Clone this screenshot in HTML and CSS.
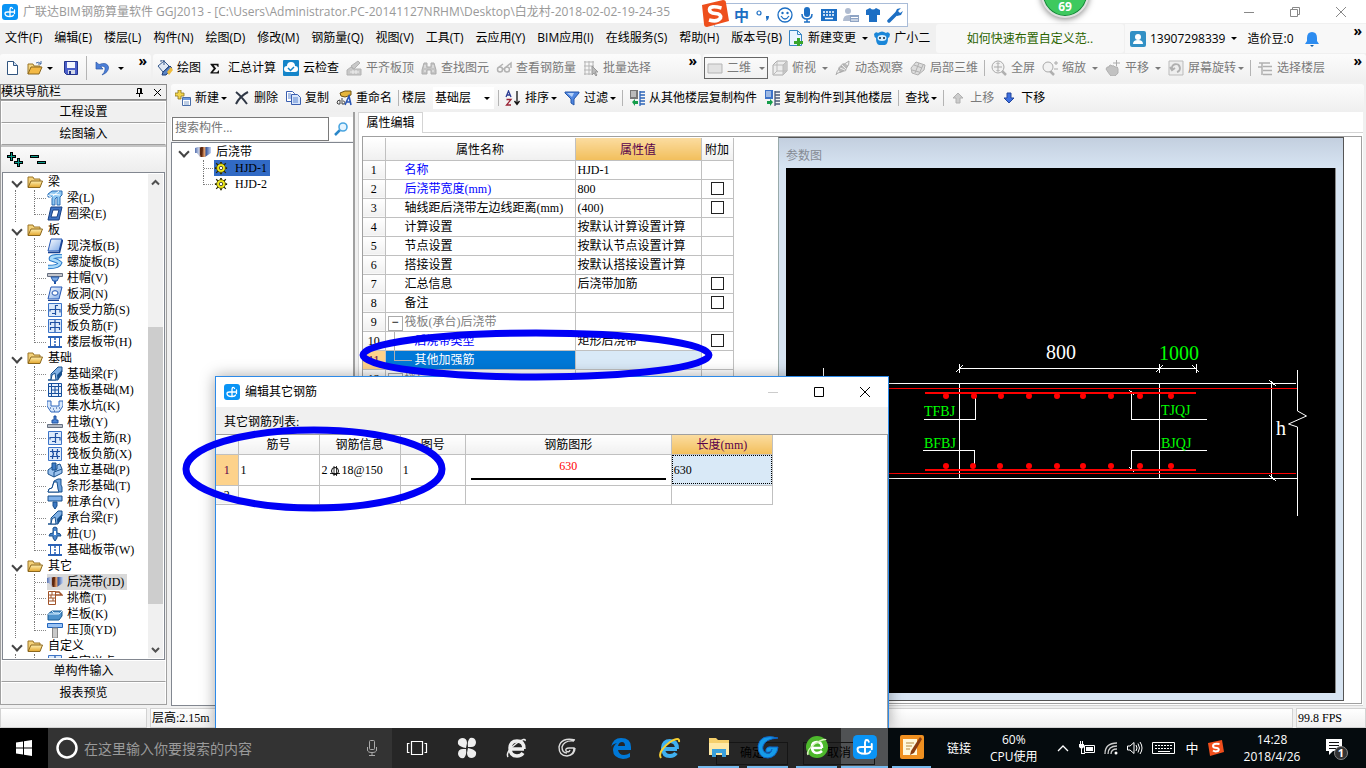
FILE: index.html
```html
<!DOCTYPE html>
<html lang="zh-CN">
<head>
<meta charset="utf-8">
<title>广联达BIM钢筋算量软件 GGJ2013</title>
<link rel="stylesheet" href="styles.css">
</head>
<body>
<svg class="defs" aria-hidden="true">
<defs>
<linearGradient id="gBlue" x1="0" y1="0" x2="1" y2="1"><stop offset="0" stop-color="#fff"/><stop offset="1" stop-color="#7ba7e6"/></linearGradient>
<linearGradient id="gFold" x1="0" y1="0" x2="0" y2="1"><stop offset="0" stop-color="#fff0b0"/><stop offset="1" stop-color="#e2a52c"/></linearGradient>
<linearGradient id="gPost" x1="0" y1="0" x2="1" y2="0"><stop offset="0" stop-color="#5570b0"/><stop offset=".25" stop-color="#c8d2e8"/><stop offset=".4" stop-color="#6a2c10"/><stop offset=".6" stop-color="#e0a070"/><stop offset=".7" stop-color="#3c5ca0"/><stop offset="1" stop-color="#c4d4f4"/></linearGradient>
</defs>
<symbol id="logo" viewBox="0 0 16 16"><rect width="16" height="16" rx="3" fill="#0a94f5"/><path d="M10.500 4.500Q10 3 8.500 3.500L8 5v7.500M12.500 6v3.500M12.500 8H5.500Q3 8 3 9.500 3 12.500 8 12.500q3 0 3.500-1.500" fill="none" stroke="#fff" stroke-width="1.300" stroke-linecap="round"/></symbol>
<symbol id="new" viewBox="0 0 16 16"><path d="M3.500 1.500h6l4 4v9h-10z" fill="#fff" stroke="#31557f"/><path d="M9.500 1.500v4h4" fill="#cfe0f6" stroke="#31557f"/></symbol>
<symbol id="open" viewBox="0 0 16 16"><path d="M1 14V4h5l1 2h6v2" fill="#f5d782" stroke="#9a7424"/><path d="M1 14l3-7h11l-3 7z" fill="#f3b945" stroke="#8a671f"/><path d="M9 3q3-2 5 1M14 1v3h-3" fill="none" stroke="#456ca5"/></symbol>
<symbol id="save" viewBox="0 0 16 16"><path d="M1.500 1.500h13v13h-11l-2-2z" fill="#4b5fc9" stroke="#23348c"/><path d="M4 2h8v6H4z" fill="#f4f7ff"/><path d="M5 10h7v4H5z" fill="#d2d9e8"/><path d="M6 11h2v3H6z" fill="#23348c"/></symbol>
<symbol id="undo" viewBox="0 0 16 16"><path d="M2 2v7h7L6.500 6.500Q12 5 11 10q-.5 2.500-3 5 7-3 6.500-8Q13 1.500 5 4.500z" fill="#4b7fd9" stroke="#2c57a6" stroke-width=".7"/></symbol>
<symbol id="draw" viewBox="0 0 16 16"><path d="M1 6l6-5 5 5-6 6z" fill="#dfe8f4" stroke="#36598c"/><path d="M4 2V0h3v5" fill="none" stroke="#36598c"/><path d="M6 12l7-6 2 2-6 7-4 0z" fill="#5a84c4" stroke="#1f3e78"/><path d="M10 12l4-5 2 3-4 5z" fill="#f0bc3c"/></symbol>
<symbol id="sigma" viewBox="0 0 16 16"><path d="M3 2h10v4h-1Q11.500 4 10 4H7l3 4-4 4.500h4.500q1.500 0 2-2h1V14H3v-1l4-5-4-5z" fill="#111"/></symbol>
<symbol id="cloud" viewBox="0 0 16 16"><rect width="16" height="16" rx="1" fill="#1585c9"/><path d="M4 12a3 3 0 0 1 0-6 4 4 0 0 1 8 0 3 3 0 0 1 0 6z" fill="#fff"/><path d="M5 8l2.500 2.500L11 7" fill="none" stroke="#1585c9" stroke-width="1.500"/></symbol>
<symbol id="align" viewBox="0 0 16 16"><path d="M5 6l7-5 2 2-6 6zM1 10l4-3 2 2h8v6H1z" fill="#c8c8c8" stroke="#b2b2b2"/><path d="M4 12h9M7 10v4M10 10v4" stroke="#eee"/></symbol>
<symbol id="bino" viewBox="0 0 16 16"><path d="M3 3h3v4h4V3h3l2 7v4h-5v-4H6v4H1v-4z" fill="#c4c4c4" stroke="#adadad"/><path d="M3 11h2M11 11h2M4 5v3M12 5v3" stroke="#eee"/></symbol>
<symbol id="glass" viewBox="0 0 16 16"><g fill="none" stroke="#b2b2b2" stroke-width="1.500"><circle cx="4" cy="9.500" r="2.500"/><circle cx="11" cy="9.500" r="2.500"/><path d="M6.500 9h2M3 7l4-3M10 7l5-4v5"/></g></symbol>
<symbol id="batch" viewBox="0 0 16 16"><path d="M1 2h10M1 6h10M1 10h7M1 14h7M2 1v14M6 1v14M10 1v8" stroke="#b5b5b5"/><path d="M9 6l6 6h-3l2 3-1 1-2-3-2 2z" fill="#bbb" stroke="#999"/></symbol>
<symbol id="box" viewBox="0 0 16 16"><path d="M1 4h14v9H1z" fill="#e2e2e2" stroke="#b5b5b5"/></symbol>
<symbol id="cube" viewBox="0 0 16 16"><path d="M1 5l4-4h10v10l-4 4H1z" fill="#ededed" stroke="#aaa"/><path d="M11 5v10l4-4V1z" fill="#c8c8c8"/><path d="M1 5h10v10M11 5l4-4M5 1v10h10M5 11l-4 4" fill="none" stroke="#bbb"/></symbol>
<symbol id="orbit" viewBox="0 0 16 16"><path d="M3 8l5-5 5 2-2 6-6 2z" fill="#bbb"/><path d="M1 15q1-7 13-14 1 8-13 13" fill="none" stroke="#aaa"/><path d="M5 8l5 2M7 5l4 4" stroke="#eee"/></symbol>
<symbol id="part3d" viewBox="0 0 16 16"><path d="M1 8l5-6 9 3-1 5-6 5-6-2z" fill="#ddd" stroke="#b0b0b0"/><path d="M4 5l8 3M2 10l7 2M9 3L5 13M13 5l-4 9" stroke="#b0b0b0"/></symbol>
<symbol id="zoomfit" viewBox="0 0 16 16"><path d="M10 10l5 5" stroke="#b0b0b0" stroke-width="2.500"/><circle cx="7" cy="7" r="6" fill="#f2f2f2" stroke="#aaa"/><path d="M7 3v8M3 7h8M5.500 4L7 2.500 8.500 4M5.500 10L7 11.500 8.500 10" fill="none" stroke="#aaa"/></symbol>
<symbol id="zoomy" viewBox="0 0 16 16"><path d="M8 11l4 4" stroke="#b0b0b0" stroke-width="2.500"/><circle cx="6" cy="7" r="5" fill="#f2f2f2" stroke="#aaa"/><path d="M12 3h4M14 1v4M12 9h4" stroke="#aaa"/></symbol>
<symbol id="hand" viewBox="0 0 16 16"><path d="M1 9q1-3 3-2V6q2-2 3 0 2-1 3 1 3-1 3 2v4q-2 3-4 3H6q-2-2-5-7z" fill="#c2c2c2" stroke="#b0b0b0"/><path d="M8 3h7M11.500 0v6" stroke="#aaa"/></symbol>
<symbol id="rot" viewBox="0 0 16 16"><path d="M1 1h14v14H1z" fill="#eee" stroke="#bbb"/><path d="M4 9a4 4 0 1 1 5 3M2 7l2 3 3-2" fill="none" stroke="#b0b0b0" stroke-width="2"/></symbol>
<symbol id="floors" viewBox="0 0 16 16"><path d="M2 3h11M1 7h4M6 6.500h9M6 10.500h9M6 14.500h9M5 3v12" stroke="#b0b0b0" stroke-width="1.500"/></symbol>
<symbol id="addc" viewBox="0 0 16 16"><path d="M3 0h3v3h3v3H6v3H3V6H0V3h3z" fill="#f2d54c" stroke="#8a7420" stroke-width=".8"/><path d="M7.500 7.500h8v8h-8z" fill="#fff" stroke="#4a6ea9"/><path d="M8 8h7v2H8z" fill="#6d9ae0"/><path d="M9 12h5M9 14h5" stroke="#7d9cc8"/></symbol>
<symbol id="del" viewBox="0 0 16 16"><path d="M2 2q5 4 11 12M14 2Q6 6 2 14" fill="none" stroke="#303846" stroke-width="2"/></symbol>
<symbol id="copy" viewBox="0 0 16 16"><path d="M1.500 1.500h6l2 2v8h-8z" fill="#fff" stroke="#3a5fb0"/><path d="M6.500 4.500h6l3 3v7h-9z" fill="#d8e6fb" stroke="#3a5fb0"/><path d="M3 4h3M3 6h3M3 8h3M8 8h5M8 10h5M8 12h5" stroke="#5c85cf"/></symbol>
<symbol id="ren" viewBox="0 0 16 16"><path d="M4 3l5-2h6v4L9 7 5 6z" fill="#e5b53c" stroke="#6e5213"/><path d="M1 13q0-3 3-3v4H2zM6 8v6h2q2-3-1-3" fill="none" stroke="#444"/><path d="M9 15l4-9 2 9M10 12h5" fill="none" stroke="#2b57b5" stroke-width="1.600"/></symbol>
<symbol id="sort" viewBox="0 0 16 16"><path d="M1 7l2.500-6L6 7M2 5h3" fill="none" stroke="#2c3d94" stroke-width="1.300"/><path d="M1.500 9.500H6L1.500 15H6" fill="none" stroke="#9a2436" stroke-width="1.300"/><path d="M12 1v13M9.500 11l2.500 3.500 2.500-3.500" fill="none" stroke="#111" stroke-width="1.300"/></symbol>
<symbol id="filt" viewBox="0 0 16 16"><path d="M1 2h14v1L10 9v6l-3-2V9L1 3z" fill="#4f86e0" stroke="#2657a8"/><path d="M3 3h7L8 7z" fill="#b6d2f8"/></symbol>
<symbol id="cpf" viewBox="0 0 16 16"><path d="M1 0h8v9H1z" fill="#777"/><path d="M2 2h5M2 4h5M2 6h5" stroke="#fff"/><path d="M3 12l3-3v2h3v3H6v2z" fill="#159d4b"/><path d="M11 2h5M11 5h5M11 8h5M11 11h5M11 14h5M11 1v15" stroke="#2d64b8" stroke-width="1.300"/></symbol>
<symbol id="cpt" viewBox="0 0 16 16"><path d="M1 0h8v9H1z" fill="#3d72c8"/><path d="M2 2h5M2 4h5M2 6h5" stroke="#fff"/><path d="M9 12l-3-3v2H3v3h3v2z" fill="#159d4b"/><path d="M11 2h5M11 5h5M11 8h5M11 11h5M11 14h5M11 1v15" stroke="#4a5a78" stroke-width="1.300"/></symbol>
<symbol id="up" viewBox="0 0 16 16"><path d="M8 3l5 5h-3v5H6V8H3z" fill="#ccc" stroke="#b0b0b0"/></symbol>
<symbol id="down" viewBox="0 0 16 16"><path d="M8 13L3 8h3V3h4v5h3z" fill="#3d6fe0" stroke="#24479c"/></symbol>
<symbol id="docadd" viewBox="0 0 16 16"><path d="M1.500.5h8l4 4v11h-12z" fill="#e9f4ff" stroke="#3584c4"/><path d="M9.500.5v4h4" fill="none" stroke="#3584c4"/><path d="M9 8h3v3h3v3h-3v3H9v-3H6v-3h3z" fill="#38a52c"/></symbol>
<symbol id="mascot" viewBox="0 0 16 16"><path d="M0 4q2-3 4-1 4-3 8 0 2-2 4 1 0 3-2 4 0 6-3 7H5q-3-1-3-7Q0 7 0 4z" fill="#1a86d8"/><ellipse cx="8" cy="8" rx="4.500" ry="3" fill="#d9f0ff"/><circle cx="6" cy="8" r="1" fill="#123"/><circle cx="10" cy="8" r="1" fill="#123"/></symbol>
<symbol id="user" viewBox="0 0 16 16"><rect width="16" height="16" rx="2" fill="#3290c5"/><circle cx="8" cy="6" r="3" fill="#fff"/><path d="M3 13q0-4 5-4t5 4z" fill="#fff"/></symbol>
<symbol id="bell" viewBox="0 0 16 16"><path d="M8 1q5 0 5 6v3l2 3H1l2-3V7q0-6 5-6z" fill="#2d8cf0"/><path d="M6 14h4l-2 2z" fill="#135ea8"/></symbol>
<symbol id="mag" viewBox="0 0 16 16"><path d="M7 9l-5 5" stroke="#2b87c9" stroke-width="2.500"/><circle cx="10" cy="6" r="4" fill="#e4f4ff" stroke="#4aa5e0" stroke-width="1.600"/></symbol>
<symbol id="fold" viewBox="0 0 16 16"><path d="M1 13V3h5l1 2h6v3" fill="#f4d27a" stroke="#9b7526"/><path d="M1 13.500L4 7h11.500L13 13.500z" fill="url(#gFold)" stroke="#8c671c"/></symbol>
<symbol id="beam" viewBox="0 0 16 16"><path d="M1 4l4-3h10v4l-2 2v8h-3V7L8 9v6H5V7H1z" fill="#8fc8f2" stroke="#2b6cb5"/><path d="M3 4l10 1M6 6l6-5M1 5l4 3" stroke="#fff"/></symbol>
<symbol id="ring" viewBox="0 0 16 16"><path d="M4 1h11l-3 13H1z" fill="#3f74c4" stroke="#163f84"/><path d="M6 4h6l-2 7H4z" fill="#fff" stroke="#163f84"/></symbol>
<symbol id="slab" viewBox="0 0 16 16"><path d="M4 1h11l-3 12H1z" fill="url(#gBlue)" stroke="#2356b4"/><path d="M1 14.500h11.500L15.500 2" fill="none" stroke="#173f8e" stroke-width="1.500"/></symbol>
<symbol id="spiral" viewBox="0 0 16 16"><path d="M15 2Q3 2 4 5q7 2 9 4-1 4-12 4" fill="none" stroke="#2676c8" stroke-width="4.500"/><path d="M15 2Q3 2 4 5q7 2 9 4-1 4-12 4" fill="none" stroke="#a8dafa" stroke-width="2.500"/></symbol>
<symbol id="cap" viewBox="0 0 16 16"><path d="M.5 3.500h15v3H.5z" fill="#c4c6cc" stroke="#666f80"/><path d="M4 7h8l-2 4H6z" fill="#79a8e2" stroke="#2356a8"/><path d="M7 11h2v3H7z" fill="#2356a8"/></symbol>
<symbol id="hole" viewBox="0 0 16 16"><path d="M4 1h11l-3 12H1z" fill="url(#gBlue)" stroke="#2356b4"/><ellipse cx="8" cy="7" rx="3" ry="2.300" fill="#fff" stroke="#2356b4"/><path d="M1 14.500h11" stroke="#173f8e"/></symbol>
<symbol id="r1" viewBox="0 0 16 16"><path d="M1.500 1.500h13v13h-13z" fill="#dceafb" stroke="#3c74c8"/><path d="M3 9.500V7.500h10v3M8.500 3v10M5 11.500h3.500M8.500 3.500H11" fill="none" stroke="#1e50a2" stroke-width="1.200"/></symbol>
<symbol id="r2" viewBox="0 0 16 16"><path d="M1.500 1.500h13v13h-13z" fill="#dceafb" stroke="#3c74c8"/><path d="M3.500 7V4.500h9V7M3.500 12V9.500h9V12M8 2v12" fill="none" stroke="#1e50a2" stroke-width="1.200"/></symbol>
<symbol id="r3" viewBox="0 0 16 16"><path d="M1.500 1.500h13v13h-13z" fill="#dceafb" stroke="#3c74c8"/><path d="M3 5.500h10M3 10.500h10M5.500 3v3q2 2 0 4v3M10.500 3v3q-2 2 0 4v3" fill="none" stroke="#1e50a2" stroke-width="1.200"/></symbol>
<symbol id="band" viewBox="0 0 16 16"><path d="M1 3h14M1 13h14" stroke="#2a62b8" stroke-width="2"/><path d="M3.500 4v8M12.500 4v8" stroke="#2a62b8"/><path d="M8 4v8" stroke="#2a62b8" stroke-width="1.500" stroke-dasharray="2 1"/></symbol>
<symbol id="fb" viewBox="0 0 16 16"><path d="M1 14h3V8l7-7h4v5l-4 4v4z" fill="#7fb0e4" stroke="#164f8c"/><path d="M4 14l1-5 3-2 1 7z" fill="#fff" stroke="#164f8c"/><path d="M10 9l5-5v5l-4 5z" fill="#164f8c"/></symbol>
<symbol id="raft" viewBox="0 0 16 16"><path d="M1.500 1.500h13v13h-13z" fill="#e6f0fc" stroke="#164f9c"/><path d="M4.500 4.500h7v7h-7zM4.500 1v3.500M11.500 1v3.500M4.500 11.500V15M11.500 11.500V15M1 4.500h3.500M1 11.500h3.500M11.500 4.500H15M11.500 11.500H15M8 4v8M4 8h8" fill="none" stroke="#164f9c"/></symbol>
<symbol id="pit" viewBox="0 0 16 16"><path d="M0 3h4v5h8V3h4v5l-4 6H4L0 8z" fill="#d8e8fc" stroke="#2e66bd"/><path d="M3 10h1M6 11h1M9 10h1M12 10h1M7 13h1" stroke="#173f8e"/></symbol>
<symbol id="pier" viewBox="0 0 16 16"><path d="M.5 10.500h15v3H.5z" fill="#b8bec8" stroke="#667080"/><path d="M5 9V6h2V2h2v4h2v3z" fill="#4d86d6" stroke="#1a4f9f"/></symbol>
<symbol id="ind" viewBox="0 0 16 16"><path d="M1 8l4-3 2 3 3-1V3l3-1 2 5v4l-8 4-6-3z" fill="#9cc3ee" stroke="#174f8c"/><path d="M5 1h4v7H5z" fill="#3f7cc6" stroke="#174f8c"/><path d="M7 10l8-3M7 10v5" stroke="#174f8c"/></symbol>
<symbol id="strip" viewBox="0 0 16 16"><path d="M1 14l1-3 3-1 2-7 4-2h3v6l1 2v5z" fill="#6fa3dc" stroke="#174f8c"/><path d="M1 14l1-3 3-1 2-6h3l1 7 1 3z" fill="#fff" stroke="#174f8c"/></symbol>
<symbol id="pcap" viewBox="0 0 16 16"><path d="M1 2h14v5H1z" fill="#7fb0e8" stroke="#174f8c"/><path d="M6 8h4v4l-2 3-2-3z" fill="#3d78c2" stroke="#174f8c"/></symbol>
<symbol id="pile" viewBox="0 0 16 16"><path d="M6 2q2-2 4 0v5q4 0 4 3h-4v2l-2 3-2-3v-2H2q0-3 4-3z" fill="#4a86cc" stroke="#174f8c"/><path d="M7 5h2v4H7z" fill="#fff"/></symbol>
<symbol id="post" viewBox="0 0 16 16"><path d="M0 4l3-1h13v6l-3 2-3 2H5L2 9H0z" fill="url(#gPost)"/><path d="M5 4l3-1-1 10-2-2z" fill="#5b2710"/></symbol>
<symbol id="eave" viewBox="0 0 16 16"><path d="M1.500 1.500h7v13h-7zM2 5h6M2 8h6M2 11h6M5 2v3M4 5v3M6 8v3" fill="#fff" stroke="#a05228"/><path d="M8 2h4l3 3H9" fill="none" stroke="#a05228" stroke-width="1.500"/></symbol>
<symbol id="rail" viewBox="0 0 16 16"><path d="M1 8l4-3h10v5l-3 4H1z" fill="#4f93cc" stroke="#195a94"/><path d="M1 8h11l3-3M5 5l2 2h5" fill="none" stroke="#d8efff"/></symbol>
<symbol id="top" viewBox="0 0 16 16"><path d="M.5 1.500h15v4H.5z" fill="#9ac3f4" stroke="#2366bd"/><path d="M5.500 6h5v10h-5z" fill="#c9c9c9" stroke="#888"/></symbol>
<symbol id="gear" viewBox="0 0 16 16"><path d="M7 1h2v14H7zM1 7h14v2H1zM3 2l11 11-1 1L2 3zM13 2L2 13l1 1L14 3z" fill="#2a2a00"/><circle cx="8" cy="8" r="5" fill="#f4ee18" stroke="#555010"/><circle cx="8" cy="8" r="2" fill="#fff" stroke="#333"/></symbol>
</svg>

<header class="title">
  <svg class="ic"><use href="#logo"/></svg>
  <h1>广联达BIM钢筋算量软件 GGJ2013 - [C:\Users\Administrator.PC-20141127NRHM\Desktop\白龙村-2018-02-02-19-24-35</h1>
  <div class="win">
    <button aria-label="最小化"><svg class="ic" viewBox="0 0 16 16"><path d="M3 8.500h10" stroke="#888"/></svg></button>
    <button aria-label="还原"><svg class="ic" viewBox="0 0 16 16"><path d="M3.500 5.500h7v7h-7zM5.500 5V3.500h7v7H11" fill="none" stroke="#888"/></svg></button>
    <button aria-label="关闭"><svg class="ic" viewBox="0 0 16 16"><path d="M3 3l10 10M13 3L3 13" stroke="#888"/></svg></button>
  </div>
</header>

<nav class="menu">
  <div class="menus">
    <button>文件(F)</button><button>编辑(E)</button><button>楼层(L)</button><button>构件(N)</button><button>绘图(D)</button><button>修改(M)</button><button>钢筋量(Q)</button><button>视图(V)</button><button>工具(T)</button><button>云应用(Y)</button><button>BIM应用(I)</button><button>在线服务(S)</button><button>帮助(H)</button><button>版本号(B)</button>
    <button class="t"><svg class="ic"><use href="#docadd"/></svg>新建变更<i class="ca"></i></button>
    <button class="t"><svg class="ic"><use href="#mascot"/></svg>广小二</button>
  </div>
  <div class="tip"><a href="#tip">如何快速布置自定义范..</a></div>
  <div class="acct">
    <button class="t"><svg class="ic"><use href="#user"/></svg>13907298339<i class="ca"></i></button>
    <button class="t bean">造价豆:0</button>
    <button class="t" aria-label="通知"><svg class="ic"><use href="#bell"/></svg></button>
    <span class="more">»</span>
  </div>
</nav>

<div class="bars">
  <div class="bar b1">
    <button aria-label="新建"><svg class="ic"><use href="#new"/></svg></button>
    <button class="t op" aria-label="打开"><svg class="ic"><use href="#open"/></svg><i class="ca"></i></button>
    <button aria-label="保存"><svg class="ic"><use href="#save"/></svg></button>
    <i class="sep tall"></i>
    <button class="t un" aria-label="撤销"><svg class="ic"><use href="#undo"/></svg><i class="ca"></i></button>
    <span class="more">»</span>
  </div>
  <div class="bar b2">
    <button class="t"><svg class="ic"><use href="#draw"/></svg>绘图</button>
    <button class="t"><svg class="ic sg"><use href="#sigma"/></svg>汇总计算</button>
    <button class="t"><svg class="ic"><use href="#cloud"/></svg>云检查</button>
    <button class="t off"><svg class="ic"><use href="#align"/></svg>平齐板顶</button>
    <button class="t off"><svg class="ic"><use href="#bino"/></svg>查找图元</button>
    <button class="t off"><svg class="ic"><use href="#glass"/></svg>查看钢筋量</button>
    <button class="t off"><svg class="ic"><use href="#batch"/></svg>批量选择</button>
    <span class="more">»</span>
  </div>
  <div class="bar b3">
    <label class="t off view"><svg class="ic"><use href="#box"/></svg><select aria-label="视图方式"><option>二维</option><option>三维</option></select><i class="ca"></i></label>
    <button class="t off wide"><svg class="ic"><use href="#cube"/></svg>俯视<i class="ca"></i></button>
    <button class="t off"><svg class="ic"><use href="#orbit"/></svg>动态观察</button>
    <button class="t off"><svg class="ic"><use href="#part3d"/></svg>局部三维</button>
    <i class="sep"></i>
    <button class="t off"><svg class="ic"><use href="#zoomfit"/></svg>全屏</button>
    <button class="t off wide"><svg class="ic"><use href="#zoomy"/></svg>缩放<i class="ca"></i></button>
    <button class="t off wide"><svg class="ic"><use href="#hand"/></svg>平移<i class="ca"></i></button>
    <button class="t off"><svg class="ic"><use href="#rot"/></svg>屏幕旋转<i class="ca"></i></button>
    <i class="sep"></i>
    <button class="t off"><svg class="ic"><use href="#floors"/></svg>选择楼层</button>
    <span class="more">»</span>
  </div>
</div>

<main>
  <aside class="nav">
    <div class="navhead"><span>模块导航栏</span>
      <button aria-label="固定"><svg class="i9" viewBox="0 0 9 9"><path d="M2.500 5V.5h4V5M1 5.500h7M4.500 6v3M5.500 1v4" fill="none" stroke="#000"/></svg></button>
      <button aria-label="关闭"><svg class="i9" viewBox="0 0 9 9"><path d="M1 1l7 7M8 1L1 8" stroke="#000"/></svg></button></div>
    <div class="navbox">
      <button class="sect">工程设置</button>
      <button class="sect">绘图输入</button>
      <div class="pm">
        <button aria-label="全部展开"><svg class="ic" viewBox="0 0 16 16"><path d="M4.500 0v9M0 4.500h9M11.500 6v9M7 10.500h9" stroke="#000" stroke-width="3"/><path d="M4.500 1v7M1 4.500h7M11.500 7v7M8 10.500h7" stroke="#0a9a8a"/></svg></button>
        <button aria-label="全部折叠"><svg class="ic" viewBox="0 0 16 16"><path d="M0 4.500h9M7 10.500h9" stroke="#000" stroke-width="3"/><path d="M1 4.500h7M8 10.500h7" stroke="#0a9a8a"/></svg></button>
      </div>
      <div class="treewrap">
        <ul class="tree">
          <li class="g"><svg class="ic"><use href="#fold"/></svg>梁</li>
          <li><svg class="ic"><use href="#beam"/></svg><span>梁(L)</span></li>
          <li class="last"><svg class="ic"><use href="#ring"/></svg><span>圈梁(E)</span></li>
          <li class="g"><svg class="ic"><use href="#fold"/></svg>板</li>
          <li><svg class="ic"><use href="#slab"/></svg><span>现浇板(B)</span></li>
          <li><svg class="ic"><use href="#spiral"/></svg><span>螺旋板(B)</span></li>
          <li><svg class="ic"><use href="#cap"/></svg><span>柱帽(V)</span></li>
          <li><svg class="ic"><use href="#hole"/></svg><span>板洞(N)</span></li>
          <li><svg class="ic"><use href="#r1"/></svg><span>板受力筋(S)</span></li>
          <li><svg class="ic"><use href="#r2"/></svg><span>板负筋(F)</span></li>
          <li class="last"><svg class="ic"><use href="#band"/></svg><span>楼层板带(H)</span></li>
          <li class="g"><svg class="ic"><use href="#fold"/></svg>基础</li>
          <li><svg class="ic"><use href="#fb"/></svg><span>基础梁(F)</span></li>
          <li><svg class="ic"><use href="#raft"/></svg><span>筏板基础(M)</span></li>
          <li><svg class="ic"><use href="#pit"/></svg><span>集水坑(K)</span></li>
          <li><svg class="ic"><use href="#pier"/></svg><span>柱墩(Y)</span></li>
          <li><svg class="ic"><use href="#r1"/></svg><span>筏板主筋(R)</span></li>
          <li><svg class="ic"><use href="#r3"/></svg><span>筏板负筋(X)</span></li>
          <li><svg class="ic"><use href="#ind"/></svg><span>独立基础(P)</span></li>
          <li><svg class="ic"><use href="#strip"/></svg><span>条形基础(T)</span></li>
          <li><svg class="ic"><use href="#pcap"/></svg><span>桩承台(V)</span></li>
          <li><svg class="ic"><use href="#fb"/></svg><span>承台梁(F)</span></li>
          <li><svg class="ic"><use href="#pile"/></svg><span>桩(U)</span></li>
          <li class="last"><svg class="ic"><use href="#band"/></svg><span>基础板带(W)</span></li>
          <li class="g"><svg class="ic"><use href="#fold"/></svg>其它</li>
          <li class="cur"><svg class="ic"><use href="#post"/></svg><span>后浇带(JD)</span></li>
          <li><svg class="ic"><use href="#eave"/></svg><span>挑檐(T)</span></li>
          <li><svg class="ic"><use href="#rail"/></svg><span>栏板(K)</span></li>
          <li class="last"><svg class="ic"><use href="#top"/></svg><span>压顶(YD)</span></li>
          <li class="g"><svg class="ic"><use href="#fold"/></svg>自定义</li>
          <li><svg class="ic"><use href="#r2"/></svg><span>自定义点</span></li>
        </ul>
        <div class="sb"><button aria-label="向上"><svg class="i9" viewBox="0 0 9 9"><path d="M1 6.500L4.500 3 8 6.500" fill="none" stroke="#505050" stroke-width="2"/></svg></button><div class="track"><div class="thumb"></div></div><button aria-label="向下"><svg class="i9" viewBox="0 0 9 9"><path d="M1 3l3.500 3.500L8 3" fill="none" stroke="#505050" stroke-width="2"/></svg></button></div>
      </div>
      <button class="sect">单构件输入</button>
      <button class="sect">报表预览</button>
    </div>
  </aside>

  <div class="work">
    <div class="bar b4">
      <button class="t"><svg class="ic"><use href="#addc"/></svg>新建<i class="ca"></i></button>
      <button class="t"><svg class="ic"><use href="#del"/></svg>删除</button>
      <button class="t"><svg class="ic"><use href="#copy"/></svg>复制</button>
      <button class="t"><svg class="ic"><use href="#ren"/></svg>重命名</button>
      <i class="sep"></i>
      <span class="lbl">楼层</span>
      <label class="t combo"><select aria-label="楼层"><option>基础层</option></select><i class="ca"></i></label>
      <i class="sep"></i>
      <button class="t"><svg class="ic"><use href="#sort"/></svg>排序<i class="ca"></i></button>
      <button class="t"><svg class="ic"><use href="#filt"/></svg>过滤<i class="ca"></i></button>
      <i class="sep"></i>
      <button class="t"><svg class="ic"><use href="#cpf"/></svg>从其他楼层复制构件</button>
      <button class="t"><svg class="ic"><use href="#cpt"/></svg>复制构件到其他楼层</button>
      <i class="sep"></i>
      <button class="t">查找<i class="ca"></i></button>
      <i class="sep"></i>
      <button class="t off"><svg class="ic"><use href="#up"/></svg>上移</button>
      <button class="t"><svg class="ic"><use href="#down"/></svg>下移</button>
    </div>
    <div class="panes">
      <section class="comp">
        <div class="search"><input type="text" placeholder="搜索构件..." aria-label="搜索构件"><button aria-label="搜索"><svg class="ic"><use href="#mag"/></svg></button></div>
        <ul class="ctree">
          <li class="g"><svg class="ic"><use href="#post"/></svg>后浇带</li>
          <li class="sel"><svg class="ic"><use href="#gear"/></svg><span>HJD-1</span></li>
          <li class="last"><svg class="ic"><use href="#gear"/></svg><span>HJD-2</span></li>
        </ul>
      </section>
      <section class="prop">
        <div class="tabs"><button class="tab">属性编辑</button></div>
        <div class="pbody">
          <div class="ptable">
            <table class="grid">
              <colgroup><col class="c1"><col class="c2"><col class="c3"><col class="c4"></colgroup>
              <thead><tr><th></th><th>属性名称</th><th class="hot">属性值</th><th>附加</th></tr></thead>
              <tbody>
                <tr><th>1</th><td class="n blue">名称</td><td>HJD-1</td><td></td></tr>
                <tr><th>2</th><td class="n blue">后浇带宽度(mm)</td><td>800</td><td class="k"><input type="checkbox" aria-label="附加 2"></td></tr>
                <tr><th>3</th><td class="n">轴线距后浇带左边线距离(mm)</td><td>(400)</td><td class="k"><input type="checkbox" aria-label="附加 3"></td></tr>
                <tr><th>4</th><td class="n">计算设置</td><td>按默认计算设置计算</td><td></td></tr>
                <tr><th>5</th><td class="n">节点设置</td><td>按默认节点设置计算</td><td></td></tr>
                <tr><th>6</th><td class="n">搭接设置</td><td>按默认搭接设置计算</td><td></td></tr>
                <tr><th>7</th><td class="n">汇总信息</td><td>后浇带加筋</td><td class="k"><input type="checkbox" aria-label="附加 7"></td></tr>
                <tr><th>8</th><td class="n">备注</td><td></td><td class="k"><input type="checkbox" aria-label="附加 8"></td></tr>
                <tr><th>9</th><td class="n gray exp">筏板(承台)后浇带</td><td></td><td></td></tr>
                <tr><th>10</th><td class="n blue sub">后浇带类型</td><td>矩形后浇带</td><td class="k"><input type="checkbox" aria-label="附加 10"></td></tr>
                <tr class="on"><th>11</th><td class="n sub end">其他加强筋</td><td></td><td></td></tr>
                <tr><th>12</th><td class="n gray exp">墙后浇带</td><td></td><td></td></tr>
              </tbody>
            </table>
          </div>
          <section class="param">
            <h2>参数图</h2>
            <svg class="cad" viewBox="787 168 548 525" preserveAspectRatio="xMinYMin meet">
              <g fill="none" stroke="#fff" shape-rendering="crispEdges">
                <path d="M960.500 368.500h237M960.500 364v9M1160.500 364v9M1197.500 364v9M957 372l7-7M1157 372l7-7M1193 365l7 7"/>
                <path d="M824.500 368v15M820 383.500h477M820 478.500h478M960.500 383v95M1160.500 383v95"/>
                <path d="M925 419.500h51V396M924 450.500h51V466M1208 419.500h-76V391M1208 450.500h-76V471M1130 390l5 5M1130 467l5 5"/>
                <path d="M1272.500 383v95M1270 380l7 6M1270 475l7 6"/>
              </g>
              <path d="M1298.500 370v41l9 5-18 8 9 3v89" fill="none" stroke="#fff"/>
              <path d="M820 388.500h478M820 473.500h477" stroke="#f00" shape-rendering="crispEdges"/>
              <path d="M926 393h271M926 470h271" stroke="#f00" stroke-width="2" shape-rendering="crispEdges"/>
              <g fill="#f00"><circle cx="947" cy="396" r="3"/><circle cx="975" cy="396" r="3"/><circle cx="1002" cy="396" r="3"/><circle cx="1030" cy="396" r="3"/><circle cx="1058" cy="396" r="3"/><circle cx="1084" cy="396" r="3"/><circle cx="1112" cy="396" r="3"/><circle cx="1141" cy="396" r="3"/><circle cx="1172" cy="396" r="3"/>
              <circle cx="947" cy="466" r="3"/><circle cx="974" cy="466" r="3"/><circle cx="1001" cy="466" r="3"/><circle cx="1030" cy="466" r="3"/><circle cx="1058" cy="466" r="3"/><circle cx="1084" cy="466" r="3"/><circle cx="1112" cy="466" r="3"/><circle cx="1141" cy="466" r="3"/><circle cx="1172" cy="466" r="3"/></g>
              <g class="big"><text x="1047" y="359" fill="#fff">800</text><text x="1160" y="360" fill="#0f0">1000</text><text x="1277" y="435" fill="#fff">h</text></g>
              <g class="mid" fill="#0f0"><text x="925" y="416">TFBJ</text><text x="925" y="448">BFBJ</text><text x="1162" y="415">TJQJ</text><text x="1162" y="448">BJQJ</text></g>
            </svg>
          </section>
        </div>
      </section>
    </div>
  </div>
</main>

<footer class="status"><span class="s1"></span><span class="s2">层高:2.15m</span><span class="s3">99.8 FPS</span></footer>

<section class="dialog" role="dialog" aria-label="编辑其它钢筋">
  <div class="dtitle"><svg class="ic"><use href="#logo"/></svg><h2>编辑其它钢筋</h2>
    <button aria-label="最小化" disabled><svg class="ic" viewBox="0 0 16 16"><path d="M3 8.500h10" stroke="#ccc"/></svg></button>
    <button aria-label="最大化"><svg class="ic" viewBox="0 0 16 16"><path d="M3.500 3.500h9v9h-9z" fill="none" stroke="#000"/></svg></button>
    <button aria-label="关闭"><svg class="ic" viewBox="0 0 16 16"><path d="M3 3l10 10M13 3L3 13" stroke="#000"/></svg></button></div>
  <p class="dlabel">其它钢筋列表:</p>
  <div class="dbody">
    <table class="grid dg">
      <colgroup><col class="d1"><col class="d2"><col class="d2"><col class="d3"><col class="d4"><col class="d5"></colgroup>
      <thead><tr><th></th><th>筋号</th><th>钢筋信息</th><th>图号</th><th>钢筋图形</th><th class="hot">长度(mm)</th></tr></thead>
      <tbody>
        <tr class="r1"><th>1</th><td>1</td><td>2<svg class="rb" viewBox="0 0 12 12"><circle cx="6" cy="6" r="3.500" fill="none" stroke="#000"/><path d="M5 1v10M7.500 1v10M1 8.500h10" stroke="#000" stroke-width=".8"/></svg>18@150</td><td>1</td><td class="shape"><span>630</span></td><td class="len">630</td></tr>
        <tr class="r2"><th>2</th><td></td><td></td><td></td><td></td><td></td></tr>
      </tbody>
    </table>
  </div>
</section>

<footer class="task">
  <button class="start" aria-label="开始"><svg class="i18" viewBox="0 0 18 18"><path d="M1 3.500l7-1v6H1zM9 2.300L17 1v7.500H9zM1 9.500h7v6l-7-1zM9 9.500h8V17l-8-1.300z" fill="#fff"/></svg></button>
  <label class="find"><svg class="i24" viewBox="0 0 24 24"><circle cx="12" cy="12" r="9.500" fill="none" stroke="#fff" stroke-width="2.500"/></svg><input type="text" placeholder="在这里输入你要搜索的内容" aria-label="搜索"><svg class="i18" viewBox="0 0 18 18"><rect x="6.500" y="1.500" width="5" height="9" rx="1" fill="none" stroke="#aaa"/><path d="M4.500 8v3q0 2.500 4.500 2.500t4.500-2.500V8M9 14v3M6 16.500h6" fill="none" stroke="#aaa"/></svg></label>
  <div class="apps">
    <button aria-label="任务视图"><svg class="i24" viewBox="0 0 24 24"><path d="M6.500 5.500h11v13h-11zM4.500 7.500h-2v9h2M19.500 7.500h2v9h-2" fill="none" stroke="#fff" stroke-width="1.200"/></svg></button>
    <button aria-label="风扇"><svg class="i24" viewBox="0 0 24 24"><g fill="#eee"><path d="M11 12Q5 11 3 8q-1-5 4-6 5 0 5 5zM13 11q-1-6 2-9 5-1 6 4 0 5-5 5zM13 12q6 1 8 4 1 5-4 6-5 0-5-5zM11 13q1 6-2 9-5 1-6-4 0-5 5-5z"/></g></svg></button>
    <button aria-label="浏览器"><svg class="i24" viewBox="0 0 24 24"><path d="M6 13h13M19 13q0-8-7-8-6.500 0-7 7 0 8 7 8 4 0 6-3" fill="none" stroke="#eee" stroke-width="3.500"/><path d="M3 21Q0 16 12 7q9-6 8-2" fill="none" stroke="#eee" stroke-width="1.500"/></svg></button>
    <button class="gap" aria-label="旋涡"><svg class="i24" viewBox="0 0 24 24"><path d="M20 4Q6 1 4 11q0 9 8 9 7-1 7-8h-5q-4 0-3 3 3 2 4-1M19 5Q9 4 7 11q0 6 5 6M12 20q8-1 8-8" fill="none" stroke="#ddd" stroke-width="1.400"/></svg></button>
    <button aria-label="Edge"><svg class="i24" viewBox="0 0 24 24"><path d="M2 11Q4 2 12 2q10 0 10 9v3H9q1 5 6 5 3 0 6-2v4q-3 2-7 2-10-1-10-9 0-4 4-7-5 1-6 4zM9 10h7q0-4-3-4t-4 4z" fill="#0078d7"/></svg></button>
    <button aria-label="IE"><svg class="i24" viewBox="0 0 24 24"><path d="M7 13h12M19 13q0-8-7-8-6.500 0-7 7 0 8 7 8 4 0 6-3" fill="none" stroke="#3fb0f0" stroke-width="4"/><path d="M3 22Q-1 16 12 6q10-6 9 0" fill="none" stroke="#f8d030" stroke-width="2"/></svg></button>
    <button class="run" aria-label="文件资源管理器"><svg class="i24" viewBox="0 0 24 24"><path d="M2 3h7l2 2h11v15H2z" fill="#f5cf6b"/><path d="M2 8h20v12H2z" fill="#ffe9a6"/><path d="M5 22v-8h14v8h-4v-4H9v4z" fill="#3aa0dc"/></svg></button>
    <button class="run" aria-label="G浏览器"><svg class="i24" viewBox="0 0 24 24"><path d="M22 3Q4-2 2 11q0 12 10 12 9-1 10-11h-6q-7-1-6 5 5 1 6-3-1 6-6 4-4-2-3-7Q9 4 22 3z" fill="#159be8" stroke="#0d65c8"/></svg></button>
    <button class="run" aria-label="360浏览器"><svg class="i24" viewBox="0 0 24 24"><circle cx="12" cy="12" r="11" fill="#4db82c"/><path d="M7 13h10M17 13q0-6-5-6t-5 5q0 6 5 6 3 0 5-2" fill="none" stroke="#fff" stroke-width="2.600"/><path d="M3 20Q1 15 11 8q9-5 10-3" fill="none" stroke="#d5f3b8" stroke-width="1.500"/></svg></button>
    <button class="run act" aria-label="广联达"><svg class="i24"><use href="#logo"/></svg></button>
    <div class="tail"><button class="run" aria-label="写字板"><svg class="i24" viewBox="0 0 24 24"><rect width="24" height="24" rx="2" fill="#f09020"/><path d="M3 4h14v16H3z" fill="#fff8dc"/><path d="M6 8h8M6 11h6M6 14h4" stroke="#b58a40"/><path d="M20 2l2 2-8 14-4 2 1-4z" fill="#8a3c10"/></svg></button></div>
  </div>
  <div class="tray">
    <span class="link">链接</span>
    <span class="cpu">60%<br>CPU使用</span>
    <div class="tic">
      <svg class="i18" viewBox="0 0 18 18"><path d="M4 12l5-5 5 5" fill="none" stroke="#fff" stroke-width="1.300"/></svg>
      <svg class="i18" viewBox="0 0 18 18"><path d="M6.500 6.500h10v7h-10z" fill="none" stroke="#fff"/><path d="M8 8h7v4H8zM1 5h5v3q-2 3-5 0zM2 2h1v3H2zM4 2h1v3H4zM3 9h1v5h3v1H3z" fill="#fff"/></svg>
      <svg class="i18" viewBox="0 0 18 18"><path d="M3 15Q3 4 15 4M6 15q0-8 9-8M9 15q0-5 6-5" fill="none" stroke="#ccc" stroke-width="1.300"/><circle cx="14" cy="14" r="1.500" fill="#fff"/></svg>
      <svg class="i18" viewBox="0 0 18 18"><path d="M1.500 7v4H4l4 3.500v-11L4 7zM10 6q2 3 0 6M12 4.500q3 4.500 0 9M14 3q4 6 0 12" fill="none" stroke="#fff"/></svg>
      <svg class="i24" viewBox="0 0 24 18"><path d="M.5 3.500h22v11H.5z" fill="none" stroke="#fff"/><path d="M3 6.500h18M3 9.500h18" stroke="#fff" stroke-dasharray="2 1"/><path d="M6 12.500h12" stroke="#fff"/></svg>
      <span class="zh">中</span>
      <svg class="i18" viewBox="0 0 18 18"><path d="M1 4l14-3 2 12-14 4z" fill="#f04e1c"/><path d="M12.500 5Q6 4 6 7q0 2 4 2 3 1 1 3-3 1-5-.5" fill="none" stroke="#fff" stroke-width="2"/></svg>
    </div>
    <span class="clock">14:28<br>2018/4/26</span>
    <button class="note" aria-label="通知"><svg class="i24" viewBox="0 0 24 24"><path d="M1 3h16v12H8l-4 4v-4H1z" fill="#fff"/><path d="M4 6.500h10M4 9.500h10M4 12.500h7" stroke="#111"/><circle cx="16" cy="17" r="6.500" fill="#333" stroke="#888"/></svg><b>1</b></button>
  </div>
  <span class="ghost g1">确定</span><span class="ghost g2">取消</span>
</footer>

<div class="ime">
  <svg class="slogo" viewBox="0 0 28 27"><path d="M1 5L22 0q3 0 3 3l3 18-22 6q-3 0-3-3z" fill="#ee4f1c"/><path d="M20.500 8Q9 5 8.500 9.500q0 3.500 6 4 6 .5 5 4.500-3 4.500-11.500 2" fill="none" stroke="#fff" stroke-width="3.600"/></svg>
  <b>中</b>
  <svg class="ic" viewBox="0 0 16 16"><circle cx="4" cy="6" r="2" fill="none" stroke="#1d6fc4" stroke-width="1.200"/><path d="M11 9h3q0 4-3 5 1-2 0-3z" fill="#1d6fc4"/></svg>
  <svg class="ic" viewBox="0 0 16 16"><g fill="none" stroke="#1d6fc4" stroke-width="1.300"><circle cx="8" cy="8" r="7"/><path d="M4 9q4 6 8 0"/></g><circle cx="5.500" cy="6" r="1.200" fill="#1d6fc4"/><circle cx="10.500" cy="6" r="1.200" fill="#1d6fc4"/></svg>
  <svg class="ic" viewBox="0 0 16 16"><rect x="5" y="0" width="6" height="10" rx="3" fill="#1d6fc4"/><path d="M3 7q0 5 5 5t5-5M8 12v3M5 15h6" fill="none" stroke="#1d6fc4" stroke-width="1.500"/></svg>
  <svg class="ic" viewBox="0 0 16 16"><path d="M0 2h16v12H0z" fill="#1d6fc4"/><path d="M2 5h12M2 8h12" stroke="#fff" stroke-width="1.500" stroke-dasharray="2 1"/><path d="M4 11.500h8" stroke="#fff" stroke-width="1.500"/></svg>
  <svg class="ic" viewBox="0 0 16 16"><circle cx="5" cy="4" r="3" fill="#b0bcd0"/><path d="M0 14q0-6 6-6h2v6z" fill="#b0bcd0"/><path d="M7 8h9v7H7z" fill="#8fa4c4"/><path d="M8 10.500h7M8 13h7" stroke="#fff"/></svg>
  <svg class="ic" viewBox="0 0 16 16"><path d="M1 3l4-2q3 3 6 0l4 2v5h-3v7H4V8H1z" fill="#1d6fc4"/></svg>
  <svg class="ic" viewBox="0 0 16 16"><path d="M2 14l7-7" stroke="#1d6fc4" stroke-width="3.500" stroke-linecap="round"/><path d="M14 1l-4 1-2 4 2 3 4-1 2-4-3 2-2-2z" fill="#1d6fc4"/></svg>
</div>
<div class="ball">69</div>
<svg class="mark m1" viewBox="0 0 354 52"><ellipse cx="177" cy="26" rx="173" ry="22"/></svg>
<svg class="mark m2" viewBox="0 0 264 86"><ellipse cx="132" cy="43" rx="128" ry="39"/></svg>
</body>
</html>
```
FILE: styles.css
```css
* { box-sizing: border-box; }
body { margin: 0; height: 100vh; display: flex; flex-direction: column; overflow: hidden; position: relative; background: #f0f0f0; color: #000; font: 12px/16px "Open Sans", "Noto Sans CJK SC", sans-serif; }
button, select { font: inherit; color: inherit; background: none; border: 0; padding: 0; margin: 0; white-space: nowrap; }
select { appearance: none; }
h1, h2, p, ul { margin: 0; padding: 0; font-size: 12px; font-weight: normal; list-style: none; }
.defs { position: absolute; width: 0; height: 0; }
svg { flex: none; display: block; }
.ic { width: 16px; height: 16px; }
.i9 { width: 9px; height: 9px; }
.i18 { width: 18px; height: 18px; }
.i24 { width: 24px; height: 24px; }

.title { height: 23px; flex: none; background: #fff; display: flex; align-items: center; padding-left: 2px; gap: 5px; color: #999; }
.title h1 { width: 680px; overflow: hidden; white-space: nowrap; }
.win { margin-left: auto; display: flex; gap: 30px; padding-right: 17px; }

.menu { height: 30px; flex: none; display: flex; margin-bottom: 1px; }
.menus { display: flex; align-items: center; gap: 12px; padding-left: 5px; width: 936px; flex: none; }
.menus .t { margin-left: -6px; }
.tip { width: 188px; display: flex; align-items: center; justify-content: center; background: #f8f8f8; border-radius: 3px; margin: 1px 1px 0 0; }
.tip a { color: #2c6400; text-decoration: none; }
.acct { flex: 1; display: flex; align-items: center; gap: 8px; background: #f8f8f8; padding-left: 5px; margin-top: 1px; }
.acct .bean { margin: 0 2px; }

.t { display: flex; align-items: center; gap: 4px; }
.off { color: #7a7a7a; }
.ca { border: 3px solid transparent; border-top-color: currentColor; border-bottom: 0; width: 6px; flex: none; }
.t .ca { margin-left: -2px; }
.wide .ca, .menu .ca { margin-left: 2px; }
.sep { width: 1px; height: 16px; background: #b4b4b4; flex: none; }
.tall { height: 24px; }
.more { margin-left: auto; align-self: flex-start; font: bold 14px/14px "Open Sans", sans-serif; padding-right: 4px; }
.bars { height: 30px; flex: none; display: flex; gap: 2px; }
.bar { display: flex; align-items: center; gap: 7px; height: 28px; background: linear-gradient(#fcfcfc, #efefef); border-radius: 3px; padding-left: 4px; }
.b1 { width: 151px; gap: 7px; }
.b1 .op .ca { margin: 0 3px 0 0; }
.b1 .un .ca { margin-left: 4px; }
.b2 { width: 548px; }
.b3 { flex: 1; gap: 7px; padding-left: 1px; }
.b3 .sep { margin: 0 -1px; }
.view { border: 1px solid #666; height: 22px; padding: 0 2px 0 2px; margin-right: -3px; }
.view .ca { margin-left: 3px; }
.sg { width: 13px; height: 13px; margin-right: 3px; }

main { flex: 1; min-height: 0; display: flex; gap: 4px; }
.nav { width: 167px; flex: none; display: flex; flex-direction: column; padding-bottom: 1px; }
.navhead { height: 16px; border: 1px solid #8a8a8a; display: flex; align-items: center; gap: 9px; padding-right: 4px; line-height: 13px; }
.navhead span { margin-right: auto; }
.navbox { flex: 1; min-height: 0; border: 1px solid #a0a0a0; display: flex; flex-direction: column; }
.nav, .comp, .prop, .status, .dlabel, .dbody { font-family: "Liberation Serif", "Noto Sans CJK SC", serif; }
.sect { height: 22px; flex: none; border: 1px solid #fff; border-bottom-color: #a0a0a0; background: #f0f0f0; }
.sect:last-child { border-bottom-color: #f0f0f0; }
.pm { height: 27px; flex: none; background: linear-gradient(#fafafa, #ededed); display: flex; gap: 7px; align-items: center; padding: 0 6px; border-top: 2px solid #c4c4c4; }
.treewrap { flex: 1; min-height: 0; display: flex; border: 1px solid #828790; margin: 0 1px; background: #fff; overflow: hidden; padding: 1px 1px 1px 2px; }
.tree { flex: 1; overflow: hidden; }
.tree li, .ctree li { height: 16px; display: flex; align-items: center; padding-left: 42px; position: relative; white-space: nowrap; }
.tree li::before { content: ""; position: absolute; left: 29px; top: 0; width: 11px; height: 16px; border-left: 1px dotted #777; background: linear-gradient(90deg, #888 50%, transparent 50%) 0 8px / 2px 1px repeat-x; }
.tree li:not(.g)::after { content: ""; position: absolute; left: 10px; top: 0; height: 16px; border-left: 1px dotted #777; }
.tree li.last::before { height: 9px; }
.tree li.g, .ctree li.g { padding-left: 22px; gap: 5px; }
.tree li.g::before, .ctree li.g::before { content: ""; left: 8px; top: 4px; width: 6px; height: 6px; border: solid #444; border-width: 0 2px 2px 0; background: none; transform: rotate(45deg); position: absolute; }
.tree li span { padding: 0 3px 0 4px; }
.tree li.cur span, .tree li.cur .ic { background: #d9d9d9; }
.sb { width: 15px; flex: none; background: #f0f0f0; display: flex; flex-direction: column; }
.sb button { height: 17px; display: flex; align-items: center; justify-content: center; }
.track { flex: 1; display: flex; flex-direction: column; justify-content: flex-end; padding-bottom: 37px; }
.thumb { height: 67%; background: #cdcdcd; }

.work { flex: 1; min-width: 0; display: flex; flex-direction: column; }
.b4 { flex: none; margin-right: 2px; }
.b4 .sep { margin: 0 -1px; }
.b4 .lbl { margin-left: -3px; }
.combo { background: #fff; height: 22px; padding: 0 4px 0 2px; width: 61px; justify-content: space-between; margin-right: -2px; }
.panes { flex: 1; min-height: 0; display: flex; gap: 3px; }
.comp { width: 184px; flex: none; display: flex; flex-direction: column; padding-top: 5px; border-right: 2px solid #a0a0a0; }
.search { display: flex; gap: 4px; align-items: center; height: 24px; background: #fff; }
.search input { width: 157px; height: 24px; border: 1px solid #7a7a7a; margin-left: 1px; padding: 0 2px 3px; font: inherit; font-family: "Open Sans", "Noto Sans CJK SC", sans-serif; }
.ctree { flex: 1; background: #fff; border: 1px solid #828790; border-right: 0; margin-top: 1px; padding-top: 1px; }
.ctree li { padding-left: 42px; }
.ctree li.g { padding-left: 23px; }
.ctree li:not(.g)::before { content: ""; position: absolute; left: 31px; top: 0; width: 10px; height: 16px; border-left: 1px dotted #777; background: linear-gradient(90deg, #888 50%, transparent 50%) 0 8px / 2px 1px repeat-x; }
.ctree li.last::before { height: 9px; }
.ctree li:not(.g) .ic { width: 14px; height: 14px; }
.ctree li span { padding: 0 3px 0 7px; }
.ctree .sel span { background: #316ac5; }
.ctree li.sel .ic { background: #316ac5; height: 16px; }

.prop { flex: 1; min-width: 0; display: flex; flex-direction: column; background: #fff; margin-right: 3px; border-left: 1px solid #d4d4d4; border-bottom: 1px solid #d4d4d4; }
.tabs { height: 21px; flex: none; border-bottom: 1px solid #d4d4d4; }
.tab { height: 21px; width: 64px; background: #fff; border: 1px solid #d4d4d4; border-width: 1px 1px 0 0; }
.pbody { flex: 1; min-height: 0; margin: 3px 1px 1px 3px; border: 1px solid #a0a0a0; display: flex; padding-right: 17px; }
.ptable { width: 415px; flex: none; padding-top: 1px; }
.grid { border-collapse: collapse; table-layout: fixed; width: 370px; }
.grid th, .grid td { border: 1px solid #c0c0c0; padding: 0 2px; height: 19px; line-height: 16px; font-weight: normal; text-align: left; white-space: nowrap; overflow: hidden; }
.grid th { text-align: center; background: linear-gradient(#fff, #f0f0f0); }
.grid thead th { height: 22px; border-top: 0; padding-top: 2px; }
.grid th:first-child { border-left: 0; }
.c1 { width: 22px; } .c2 { width: 190px; } .c3 { width: 126px; } .c4 { width: 32px; }
.grid .hot { background: linear-gradient(#fbdca0, #f2bf5c); color: #58004c; }
.grid .n { padding-left: 19px; position: relative; }
.grid .blue { color: #00f; }
.grid .gray { color: #808080; }
.grid .sub { padding-left: 29px; }
.grid .exp::before { content: "−"; color: #000; position: absolute; left: 2px; top: 3px; width: 13px; height: 13px; border: 1px solid #aaa; font: 12px/10px "Liberation Sans", sans-serif; text-align: center; }
.grid .sub::before { content: ""; position: absolute; left: 8px; top: 0; height: 19px; border-left: 1px solid #b0b0b0; }
.grid .end::before { height: 9px; width: 17px; border-bottom: 1px solid #b0b0b0; }
.grid .k { text-align: center; line-height: 0; }
.grid input { appearance: none; width: 13px; height: 13px; border: 1px solid #222; margin: 0; background: #fff; vertical-align: middle; }
.on .n { background: #0078d7; color: #fff; }
.on td + td { background: #d9e9f7; }
.on td:last-child { background: #fff; }
.grid .on th, .dg .r1 th { background: #fdd28b; color: #58004c; }
.param { flex: 1; display: flex; flex-direction: column; background: linear-gradient(#c3cfdf, #d7e4f2 30px); border: 1px solid #555; border-left-color: #9aa; padding: 0 7px 7px; margin-bottom: 2px; }
.param h2 { height: 30px; line-height: 34px; color: #858b94; flex: none; font-family: "Noto Sans CJK SC", sans-serif; }
.cad { flex: 1; min-height: 0; width: 100%; background: #000; border-right: 1px solid #888; font-family: "Liberation Serif", serif; }
.big { font-size: 20px; }
.mid { font-size: 14px; }

.status { height: 22px; flex: none; display: flex; gap: 3px; padding-top: 2px; }
.status span { border: 1px solid #d2d2d2; background: linear-gradient(#fff, #f0f0f0); padding-left: 1px; line-height: 18px; }
.s1 { width: 147px; } .s2 { flex: 1; } .s3 { width: 70px; }

.dialog { position: absolute; left: 215px; top: 376px; width: 674px; height: 352px; background: #fff; border: 1px solid #2d8ae8; border-bottom: 0; box-shadow: 0 0 14px rgba(0,0,0,.35); display: flex; flex-direction: column; }
.dtitle { height: 30px; display: flex; align-items: center; padding: 0 15px 0 8px; gap: 30px; flex: none; }
.dtitle h2 { margin-left: -25px; margin-right: auto; }
.dlabel { height: 27px; line-height: 31px; background: #f0f0f0; padding-left: 8px; flex: none; }
.dbody { flex: 1; border: 1px solid #a0a0a0; border-width: 1px 1px 0 0; }
.dg { width: 557px; }
.dg thead th { height: 19px; }
.dg .r1 > * { height: 31px; }
.dg .r2 > * { height: 19px; }
.d1 { width: 22px; } .d2 { width: 81px; } .d3 { width: 65px; } .d4 { width: 206px; } .d5 { width: 101px; }
.dg .rb { display: inline-block; width: 12px; height: 12px; vertical-align: middle; margin: 0 1px; }
.dg .shape { color: #f00; text-align: center; padding: 0 5px; }
.shape span { display: block; height: 21px; border-bottom: 2px solid #000; line-height: 14px; }
.dg .len { background: #d9e9f7; outline: 1px dotted #000; outline-offset: -2px; }

.task { position: relative; height: 40px; flex: none; background: #050b0e; color: #fff; display: flex; z-index: 2; }
.start { width: 48px; display: flex; align-items: center; justify-content: center; background: #000; }
.find { width: 344px; background: #333; display: flex; align-items: center; padding: 0 11px 0 7px; gap: 5px; flex: none; }
.find input { flex: 1; min-width: 0; background: none; border: 0; padding: 0; font: 14px/20px "Noto Sans CJK SC", sans-serif; color: #fff; }
.find input::placeholder { color: #9a9a9a; }
.apps { display: flex; background: #262626; flex: none; }
.apps button { width: 49px; display: flex; align-items: center; justify-content: center; }
.apps button:nth-child(-n+3) { width: 50px; }
.apps .gap { width: 54px; padding-right: 4px; }
.apps .run { border-bottom: 2px solid #76b9ed; width: 41px; margin: 0 4px; }
.apps .act { width: 47px; margin: 0; background: #505254; }
.tail { display: flex; background: #050b0e; }
.apps .tail button { margin-right: 0; width: 39px; }
.tray { flex: 1; display: flex; align-items: center; text-align: center; line-height: 17px; padding-left: 16px; }
.cpu { margin-left: 19px; }
.tic { display: flex; align-items: center; gap: 6px; margin-left: 16px; }
.zh { font-size: 13px; }
.tic .zh, .tic .i24 { margin: 0 2px; }
.clock { margin-left: 19px; }
.note { position: relative; margin: 0 17px 0 auto; }
.note b { position: absolute; left: 12px; top: 9px; width: 8px; font-size: 11px; line-height: 16px; }
.ghost { position: absolute; top: 14px; height: 23px; width: 72px; border: 1px solid #151515; color: #000; text-align: center; line-height: 20px; }
.g1 { left: 716px; } .g2 { left: 803px; }
.apps svg { position: relative; z-index: 1; }

.ime { position: absolute; left: 714px; top: 3px; width: 194px; height: 24px; background: #fff; border: 1px solid #a9bcd8; display: flex; align-items: center; gap: 6px; padding-left: 19px; }
.ime b { color: #1d6fc4; font-size: 15px; }
.slogo { position: absolute; left: -14px; top: -4px; width: 28px; height: 27px; }
.ball { position: absolute; left: 1041px; top: -30px; width: 48px; height: 48px; border-radius: 50%; background: #3ec95f; border: 2px solid #e0e0e0; box-shadow: inset 0 0 0 1px #17803a, 0 1px 6px rgba(0,0,0,.5); color: #fff; font-weight: bold; text-align: center; padding-top: 26px; line-height: 18px; }
.mark { position: absolute; fill: none; stroke: #0000f6; stroke-width: 7; z-index: 1; }
.m1 { left: 359px; top: 329px; width: 354px; height: 52px; }
.m2 { left: 182px; top: 426px; width: 264px; height: 86px; }
```
